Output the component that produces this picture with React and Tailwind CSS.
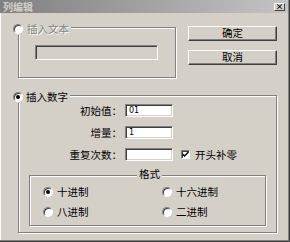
import React from "react";

function Radio({ checked }) {
  return (
    <span className="relative flex h-[10px] w-[10px] shrink-0 items-center justify-center rounded-full border border-t-[#808080] border-l-[#808080] border-b-white border-r-white bg-white shadow-[inset_1px_1px_0_#404040]">
      {checked && <span className="h-[4px] w-[4px] rounded-full bg-black" />}
    </span>
  );
}

function Checkbox() {
  return (
    <span className="flex h-[9px] w-[9px] shrink-0 items-center justify-center border border-t-[#808080] border-l-[#808080] border-b-white border-r-white bg-white shadow-[inset_1px_1px_0_#404040]">
      <svg width="7" height="7" viewBox="0 0 7 7">
        <path d="M0.5 3 L2.5 5 L6.5 1" stroke="#000" strokeWidth="1.4" fill="none" />
      </svg>
    </span>
  );
}

function Field({ value = "" }) {
  return (
    <div className="flex h-[13px] w-[48px] items-center border border-t-[#808080] border-l-[#808080] border-b-white border-r-white bg-white pl-[3px] font-['DejaVu_Sans',sans-serif] text-[8px] leading-none shadow-[inset_1px_1px_0_#404040,inset_-1px_-1px_0_#d4d0c8]">
      {value}
    </div>
  );
}

function Button({ children }) {
  return (
    <button className="flex h-[15px] w-[89px] items-center justify-center border border-t-white border-l-white border-b-[#404040] border-r-[#404040] bg-[#d4d0c8] leading-none shadow-[inset_-1px_-1px_0_#808080]">
      {children}
    </button>
  );
}

const etched = "border border-[#808080] shadow-[1px_1px_0_#fff,inset_1px_1px_0_#fff]";

export default function App() {
  return (
    <div className="flex h-[242px] w-[290px] flex-col bg-[#d4d0c8] font-['Noto_Sans_CJK_SC',sans-serif] text-[10.5px] leading-[12px] text-black shadow-[inset_-1px_-1px_0_#404040,inset_-2px_-2px_0_#808080,inset_1px_1px_0_#fff]">
      {/* title bar */}
      <div className="mr-[2px] flex h-[13px] items-center justify-between bg-linear-to-r from-[#808080] to-[#c4c4c4]">
        <span className="pl-[3px] text-[10px] font-bold leading-[13px] text-[#d4d0c8]">列编辑</span>
        <span className="mr-[3px] flex h-[8px] w-[11px] items-center justify-center border border-t-white border-l-white border-b-[#404040] border-r-[#404040] bg-[#d4d0c8] text-[8px] font-bold leading-none">
          ×
        </span>
      </div>

      {/* top row */}
      <div className="mt-[14px] flex items-start">
        <div className={"relative ml-[18px] h-[51px] w-[158px] " + etched}>
          <div className="absolute -left-[6px] -top-[5px] flex items-center gap-[4px] bg-[#d4d0c8] pr-[2px]">
            <Radio />
            <span className="text-[#808080] [text-shadow:1px_1px_0_#fff]">插入文本</span>
          </div>
          <div className="ml-[16px] mt-[17px] h-[15px] w-[123px] border border-t-[#808080] border-l-[#808080] border-b-white border-r-white bg-[#d4d0c8] shadow-[inset_1px_1px_0_#404040]" />
        </div>
        <div className="-mt-[1px] ml-[12px] flex flex-col gap-[9px]">
          <Button>确定</Button>
          <Button>取消</Button>
        </div>
      </div>

      {/* insert number group */}
      <div className={"relative ml-[18px] mt-[17px] h-[138px] w-[259px] " + etched}>
        <div className="absolute -left-[6px] -top-[5px] flex items-center gap-[3px] bg-[#d4d0c8] pr-[2px]">
          <Radio checked />
          <span>插入数字</span>
        </div>

        <div className="mt-[8px] flex flex-col gap-[9px]">
          <div className="flex items-center">
            <span className="w-[103px] text-right">初始值：</span>
            <div className="ml-[3px]"><Field value="01" /></div>
          </div>
          <div className="flex items-center">
            <span className="w-[103px] text-right">增量：</span>
            <div className="ml-[3px]"><Field value="1" /></div>
          </div>
          <div className="flex items-center">
            <span className="w-[103px] text-right">重复次数：</span>
            <div className="ml-[3px]"><Field /></div>
            <div className="ml-[8px] flex items-center gap-[5px]">
              <Checkbox />
              <span>开头补零</span>
            </div>
          </div>
        </div>

        <div className={"relative ml-[10px] mt-[14px] h-[51px] w-[237px] " + etched}>
          <div className="absolute -top-[8px] left-0 right-0 flex justify-center">
            <span className="ml-[4px] bg-[#d4d0c8] px-[2px]">格式</span>
          </div>
          <div className="mt-[10px] grid grid-cols-[119px_1fr] gap-y-[8px]">
            <div className="flex h-[12px] items-center gap-[4px] pl-[13px]">
              <Radio checked />
              <span>十进制</span>
            </div>
            <div className="flex h-[12px] items-center gap-[4px] pl-[13px]">
              <Radio />
              <span>十六进制</span>
            </div>
            <div className="flex h-[12px] items-center gap-[4px] pl-[13px]">
              <Radio />
              <span>八进制</span>
            </div>
            <div className="flex h-[12px] items-center gap-[4px] pl-[13px]">
              <Radio />
              <span>二进制</span>
            </div>
          </div>
        </div>
      </div>
    </div>
  );
}
